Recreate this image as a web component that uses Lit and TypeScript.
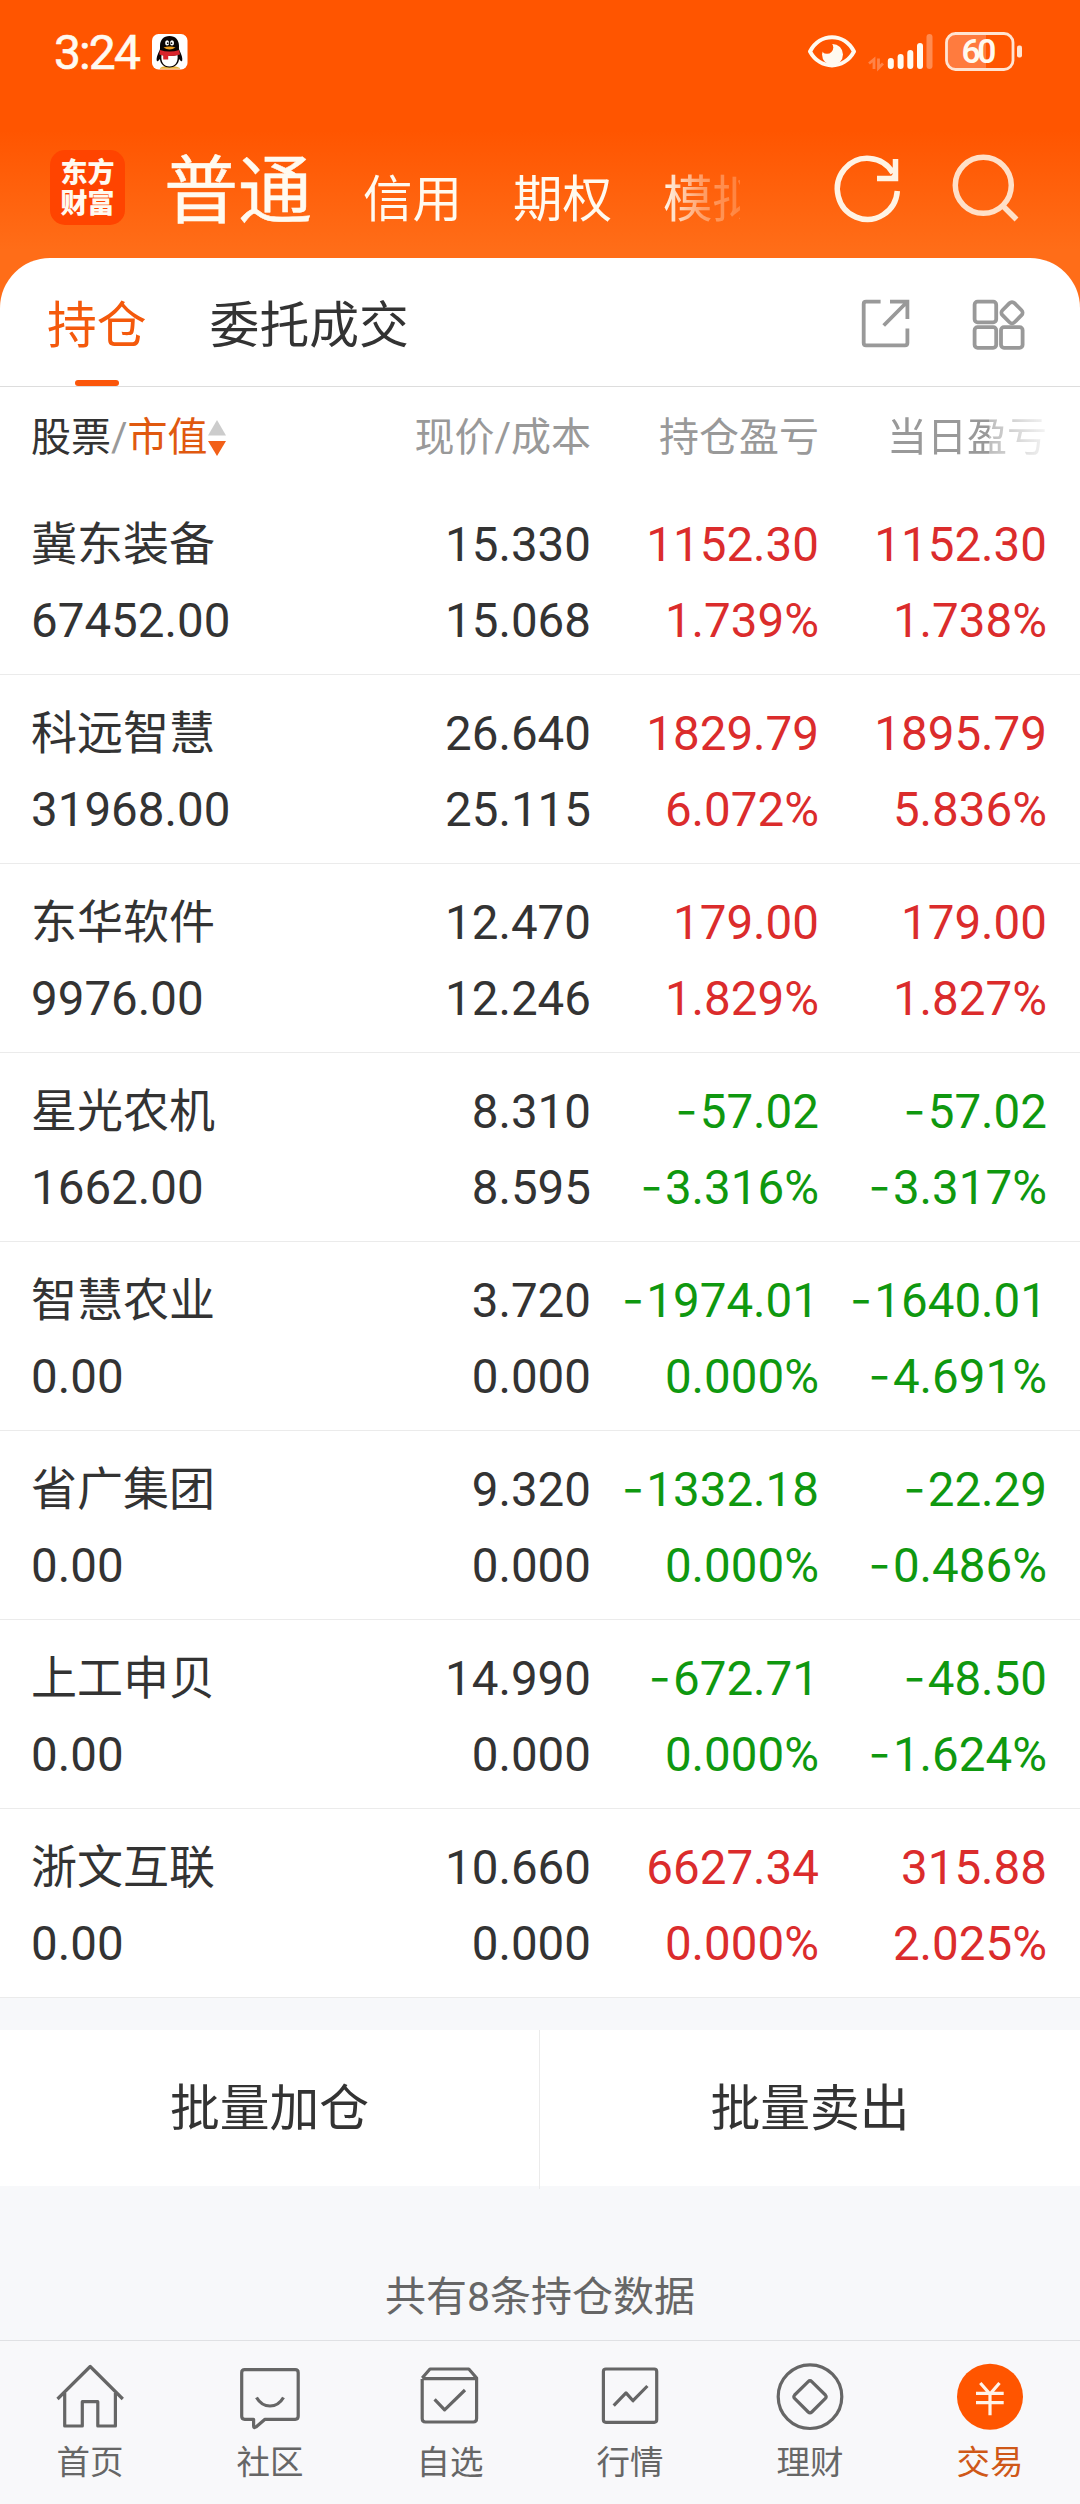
import { LitElement, html, css, svg } from "lit";
import { customElement } from "lit/decorators.js";

type Trend = "up" | "down";
interface Holding {
  name: string;
  value: string;
  price: string;
  cost: string;
  profit: string;
  profitRate: string;
  day: string;
  dayRate: string;
  trend: Trend;
}

const row = (
  name: string, value: string, price: string, cost: string,
  profit: string, profitRate: string, day: string, dayRate: string, trend: Trend,
): Holding => ({ name, value, price, cost, profit, profitRate, day, dayRate, trend });

const HOLDINGS: Holding[] = [
  row("冀东装备", "67452.00", "15.330", "15.068", "1152.30", "1.739%", "1152.30", "1.738%", "up"),
  row("科远智慧", "31968.00", "26.640", "25.115", "1829.79", "6.072%", "1895.79", "5.836%", "up"),
  row("东华软件", "9976.00", "12.470", "12.246", "179.00", "1.829%", "179.00", "1.827%", "up"),
  row("星光农机", "1662.00", "8.310", "8.595", "-57.02", "-3.316%", "-57.02", "-3.317%", "down"),
  row("智慧农业", "0.00", "3.720", "0.000", "-1974.01", "0.000%", "-1640.01", "-4.691%", "down"),
  row("省广集团", "0.00", "9.320", "0.000", "-1332.18", "0.000%", "-22.29", "-0.486%", "down"),
  row("上工申贝", "0.00", "14.990", "0.000", "-672.71", "0.000%", "-48.50", "-1.624%", "down"),
  row("浙文互联", "0.00", "10.660", "0.000", "6627.34", "0.000%", "315.88", "2.025%", "up"),
];

const NAV = [
  { label: "首页", icon: svg`<path d="M12.5 44 45.2 11.5 77.8 44M19.7 38V71H37.3V46.7H52.8V71H70.4V38"/>` },
  { label: "社区", icon: svg`<path d="M19.7 14.7H70.2Q73.2 14.7 73.2 17.7V61.3Q73.2 64.3 70.2 64.3H40L31 72Q28.6 73.5 28.6 71V64.3H19.7Q16.7 64.3 16.7 61.3V17.7Q16.7 14.7 19.7 14.7Z"/><path d="M31.5 42.5Q36.5 51 45 51T58.5 42.5"/>` },
  { label: "自选", icon: svg`<path d="M17.2 24V63.5Q17.2 67 20.5 67H68.3Q71.6 67 71.6 63.5V23L63.8 14H25L17.2 23M17.2 23.7H71.6M29.6 44.3 39.6 54.8 60 35"/>` },
  { label: "行情", icon: svg`<rect x="18.4" y="14" width="53.3" height="53.3" rx="2.5"/><path d="M28.7 50.7 41 37.9 48 45.7 62.4 31"/>` },
  { label: "理财", icon: svg`<circle cx="45" cy="41.7" r="31.8"/><path d="M43.2 26.6Q45 24.8 46.8 26.6L60.4 40Q61.9 41.7 60.4 43.4L46.8 57Q45 58.8 43.2 57L29.6 43.4Q28.1 41.7 29.6 40Z"/>` },
  { label: "交易", icon: svg`<circle class="disc" cx="45" cy="41.7" r="33"/><path class="yen" d="M35.3 28 45 39 54.5 28M31 38.4H58.7M31 47.6H58.7M45 38V60.3"/>` },
];

@customElement("app-root")
export class AppRoot extends LitElement {
  static styles = css`
    :host {
      display: block;
      width: 1080px;
      height: 2504px;
      overflow: hidden;
      color: #333;
      background: #f7f8fa;
      font-family: Roboto, "Noto Sans CJK SC", sans-serif;
    }
    * { box-sizing: border-box; }
    svg { display: block; fill: none; flex: none; }
    .page { display: flex; flex-direction: column; height: 2504px; }
    .top {
      height: 308px;
      margin-bottom: -50px;
      background: linear-gradient(#ff5500 0, #ff5500 130px, #ff6d18 250px);
      color: #fffaf0;
      flex: none;
    }
    .status { display: flex; align-items: center; height: 104px; padding: 0 57px 0 54px; }
    .time { font-size: 48px; font-weight: 400; letter-spacing: -1.9px; line-height: 60px; width: 98px; white-space: nowrap; -webkit-text-stroke: 0.6px #fffaf0; padding-top: 2px; }
    .spacer { flex: 1; }
    .head { display: flex; align-items: center; height: 153px; padding: 0 0 0 50px; }
    .logo {
      width: 75px; height: 75px; margin-top: 14px; border-radius: 15px; background: #ff4400;
      font-family: "Noto Sans CJK SC", sans-serif; font-weight: 900; font-size: 27px; line-height: 31px;
      text-align: center; padding-top: 5px; flex: none;
    }
    .markets {
      display: flex; align-items: baseline; gap: 51px; width: 576px; margin-left: 39px; padding-top: 22px;
      overflow: hidden; white-space: nowrap; font-size: 49.5px; height: 132px; line-height: 110px;
      mask-image: linear-gradient(90deg, #000 498px, rgba(0,0,0,.4) 538px, rgba(0,0,0,.2) 578px);
    }
    .markets .on { font-size: 74px; font-weight: 400; -webkit-text-stroke: 0.5px #fffaf0; }
    .tools { margin-left: 50px; }
    .card { background: #fff; border-radius: 50px 50px 0 0; flex: none; }
    .tabs {
      display: flex; align-items: center; height: 129px; padding: 0 53px 0 47px;
      border-bottom: 1px solid #ddd; font-size: 49.8px;
    }
    .tab { height: 128px; line-height: 136px; margin-right: 63px; display: flex; flex-direction: column; align-items: center; }
    .tab.on { color: #f4590c; }
    .tab.on::after { content: ""; width: 44px; height: 6px; border-radius: 3px; background: #fb560a; margin-top: -14px; flex: none; }
    .shortcuts { margin-top: 4px; }
    .grid { display: grid; grid-template-columns: 1fr 250px 228px 228px; padding: 0 33px 0 31px; }
    .grid > :not(:first-child) { text-align: right; }
    .thead { height: 99px; line-height: 102px; font-size: 40px; color: #999; white-space: nowrap; }
    .sort { display: flex; align-items: center; }
    .dark { color: #333; }
    .orange { color: #e0590f; }
    .fade {
      mask-image: linear-gradient(90deg, #000 0 170px, rgba(0,0,0,.65) 170px, rgba(0,0,0,.1) 228px);
    }
    .holding { height: 189px; padding-top: 21px; border-bottom: 1px solid #ebebeb; font-size: 47.5px; line-height: 76px; white-space: nowrap; }
    .name { font-size: 46px; height: 76px; line-height: 74px; }
    .minus { font-size: 37px; font-weight: 500; line-height: 0; vertical-align: 2px; margin-right: 3px; }
    .up { color: #db2c2c; }
    .down { color: #0f980f; }
    .actions { display: grid; grid-template-columns: 540px 540px; height: 156px; margin-top: 32px; background: #fff; flex: none; }
    .action { font-size: 49.8px; line-height: 159px; text-align: center; }
    .action:first-child { border-right: 1px solid #ebebeb; }
    .total { height: 154px; flex: none; padding-top: 86px; font-size: 41px; line-height: 50px; color: #666; text-align: center; }
    .nav { display: grid; grid-template-columns: repeat(6, 180px); height: 164px; border-top: 1px solid #e0e1e4; background: #f8f8fa; flex: none; }
    .item { display: flex; flex-direction: column; align-items: center; color: #666; font-size: 33.5px; line-height: 46px; padding-top: 14px; }
    .item svg { stroke: #666; stroke-width: 3.2; stroke-linejoin: round; }
    .item.on { color: #cf5818; }
    .item .disc { fill: #ff5500; stroke: none; }
    .item .yen { stroke: #fff3e8; stroke-linejoin: miter; }
  `;

  private status() {
    return html`
      <div class="status">
        <span class="time">3:24</span>
        <svg width="36" height="36" viewBox="0 0 36 36">
          <rect width="35.5" height="35.5" rx="6.5" fill="#fff"/>
          <path d="M8 34q4-3 9-1 6-2 11 1v.8H8z" fill="#e8b23c"/>
          <path d="M17.500 2c-6 0-9.500 4-9.500 10 0 2 .2 3-.5 4.500-2 4-3.500 8-2.600 10.500.7 1 2-.5 3-2C8.500 30.500 12.500 33.500 17.500 33.500s9-3 9.600-8.500c1 1.500 2.300 3 3 2 .9-2.500-.6-6.500-2.600-10.500-.7-1.500-.5-2.500-.5-4.500C27 6 23.500 2 17.500 2z" fill="#0a0505"/>
          <path d="M9.500 21q8 2 16 0c1 7-2.500 11.500-8 11.500s-9-4.500-8-11.500z" fill="#fff"/>
          <ellipse cx="15.100" cy="8.900" rx="2" ry="2.700" fill="#fff"/><ellipse cx="20" cy="8.900" rx="2" ry="2.700" fill="#fff"/>
          <circle cx="15.700" cy="9.200" r=".9" fill="#111"/><circle cx="19.500" cy="9.200" r=".9" fill="#111"/>
          <path d="M11.500 13.500q6-2 12 0-6 4-12 0z" fill="#f0a020"/>
          <path d="M8 16q9.500 3 19.200 0l.8 4.500q-5 1.500-11.800 1.500V25.500h-5V21.500l-4-1z" fill="#d8232c"/>
        </svg>
        <span class="spacer"></span>
        <svg width="216" height="44" viewBox="807 30 216 44">
          <circle cx="832.500" cy="54.500" r="10.500" fill="#fffaf0"/>
          <circle cx="827" cy="47.500" r="6.300" fill="#ff5500"/>
          <path d="M810 51.500C820 32.500 844 32.500 854 51.500 844 70 820 70 810 51.500Z" stroke="#fffaf0" stroke-width="4" stroke-linejoin="round"/>
          <path d="M869 63.500 874 59.500V69M883 63.500 878.500 68V58.500" stroke="#ff8347" stroke-width="2.800"/>
          <g stroke="#fffaf0" stroke-width="6" stroke-linecap="round">
            <path d="M890.800 61V66M900.600 57V66M910.300 53V66M920 46V66"/>
            <path d="M929.500 37V66" stroke="#ff8b50"/>
          </g>
          <path d="M955 34.500H986V69H955Q947 69 947 61V42Q947 34.500 955 34.500Z" fill="#ff7b3e"/>
          <rect x="946.500" y="33.500" width="66.500" height="36" rx="9" stroke="#ffe4d2" stroke-width="2.800"/>
          <rect x="1017" y="45.500" width="5" height="12" rx="2" fill="#ffe4d2"/>
          <text x="979" y="62.800" text-anchor="middle" font-size="33.500" font-weight="600" fill="#fffaf0" textLength="35">60</text>
        </svg>
      </div>`;
  }

  private amount(s: string) {
    return s.startsWith("-") ? html`<span class="minus">−</span>${s.slice(1)}` : s;
  }

  private holding(h: Holding) {
    return html`
      <div class="grid holding">
        <div><div class="name">${h.name}</div><div>${h.value}</div></div>
        <div>${h.price}<br>${h.cost}</div>
        <div class=${h.trend}>${this.amount(h.profit)}<br>${this.amount(h.profitRate)}</div>
        <div class=${h.trend}>${this.amount(h.day)}<br>${this.amount(h.dayRate)}</div>
      </div>`;
  }

  render() {
    return html`
      <div class="page">
        <header class="top">
          ${this.status()}
          <div class="head">
            <div class="logo">东方<br>财富</div>
            <div class="markets"><span class="on">普通</span><span>信用</span><span>期权</span><span>模拟</span></div>
            <svg class="tools" width="290" height="100" viewBox="790 130 290 100" stroke-width="5.500">
              <path d="M897.300 190A30 30.500 0 1 1 893 172M895.500 158V177.500H877" stroke="#fff3e4"/>
              <path d="M895.500 177.500V170L889 177.500Z" fill="#fff3e4"/>
              <g stroke="#ffe0c8"><circle cx="983.300" cy="184.300" r="28"/><path d="M1003 205 1016.500 218.500"/></g>
            </svg>
          </div>
        </header>
        <section class="card">
          <div class="tabs">
            <div class="tab on">持仓</div>
            <div class="tab">委托成交</div>
            <span class="spacer"></span>
            <svg class="shortcuts" width="170" height="60" viewBox="857 294 170 60" stroke="#999" stroke-width="3.800">
              <path d="M880.600 301.700H866Q863.700 301.700 863.700 304V343Q863.700 345.300 866 345.300H905Q907.400 345.300 907.400 343V328.500M890 301.700H907.400V319M883.700 325.500 907 302"/>
              <rect x="974.600" y="301.700" width="21.600" height="20.600" rx="3"/>
              <rect x="974.600" y="327.200" width="21.600" height="20.600" rx="3"/>
              <rect x="1001" y="327.200" width="21.600" height="20.600" rx="3"/>
              <rect x="1003.500" y="304.200" width="17" height="17" rx="3.500" transform="rotate(45 1012 312.700)"/>
            </svg>
          </div>
          <div class="grid thead">
            <div class="sort">
              <span class="dark">股票</span>/<span class="orange">市值</span>
              <svg width="18" height="38" viewBox="1 0 18 38"><path d="M10 1 19 16.500H1z" fill="#ccc"/><path d="M1 22H19L10 37z" fill="#f26018"/></svg>
            </div>
            <div>现价/成本</div><div>持仓盈亏</div><div class="fade">当日盈亏</div>
          </div>
          ${HOLDINGS.map((h) => this.holding(h))}
        </section>
        <div class="actions"><div class="action">批量加仓</div><div class="action">批量卖出</div></div>
        <div class="total">共有8条持仓数据</div>
        <nav class="nav">
          ${NAV.map((n, i) => html`
            <div class="item ${i === 5 ? "on" : ""}">
              <svg width="90" height="85" viewBox="0 0 90 85">${n.icon}</svg>
              <span>${n.label}</span>
            </div>`)}
        </nav>
      </div>`;
  }
}
